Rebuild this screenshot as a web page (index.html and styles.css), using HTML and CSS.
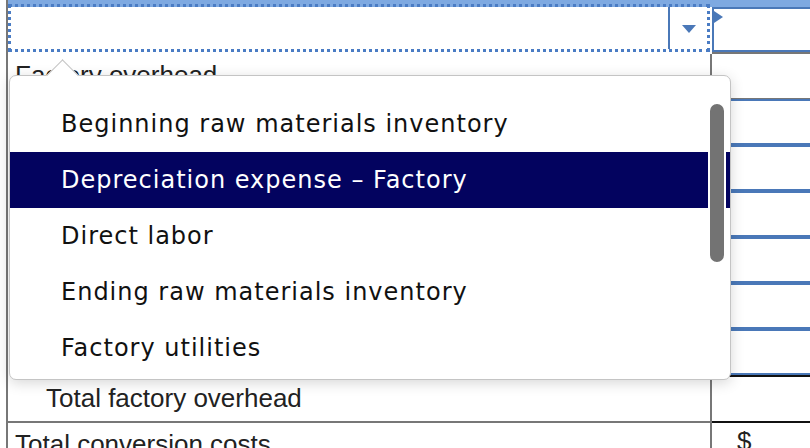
FILE: index.html
```html
<!DOCTYPE html>
<html>
  <head>
    <meta name="viewport" content="width=device-width,initial-scale=1.0" />
    <title>Conversion costs</title>
    <link rel="stylesheet" href="styles.css">
  </head>
  <body>
    <div class="sheet">
      <div class="row row-select">
        <div class="cell label">
          <div class="select">
            <div class="select-value"></div>
            <div class="select-btn"><span class="arrow"></span></div>
          </div>
        </div>
        <div class="cell amount">
          <div class="input focused"><span class="marker"></span></div>
        </div>
      </div>

      <div class="row row-head">
        <div class="cell label">Factory overhead</div>
        <div class="cell amount"></div>
      </div>

      <div class="row"><div class="cell label"></div><div class="cell amount"><div class="input"></div></div></div>
      <div class="row"><div class="cell label"></div><div class="cell amount"><div class="input"></div></div></div>
      <div class="row"><div class="cell label"></div><div class="cell amount"><div class="input"></div></div></div>
      <div class="row"><div class="cell label"></div><div class="cell amount"><div class="input"></div></div></div>
      <div class="row"><div class="cell label"></div><div class="cell amount"><div class="input"></div></div></div>
      <div class="row"><div class="cell label"></div><div class="cell amount"><div class="input"></div></div></div>

      <div class="row row-total">
        <div class="cell label indent">Total factory overhead</div>
        <div class="cell amount"></div>
      </div>

      <div class="row row-grand">
        <div class="cell label">Total conversion costs</div>
        <div class="cell amount">$</div>
      </div>
    </div>

    <div class="popup">
      <span class="caret"></span>
      <ul class="options">
        <li class="option">Beginning raw materials inventory</li>
        <li class="option selected">Depreciation expense – Factory</li>
        <li class="option">Direct labor</li>
        <li class="option">Ending raw materials inventory</li>
        <li class="option">Factory utilities</li>
      </ul>
      <span class="thumb"></span>
    </div>
  </body>
</html>
```

FILE: styles.css
```css
body {
  margin: 0;
  width: 810px;
  height: 448px;
  overflow: hidden;
  position: relative;
  background: #fff;
  font-family: "Liberation Sans", Arial, sans-serif;
  font-size: 26px;
  color: #222;
}

.sheet {
  margin-left: 6px;
  width: 840px;
  border-left: 2px solid #777;
}

.row {
  display: flex;
  height: 46px;
}

.cell {
  box-sizing: border-box;
}

.cell.label {
  width: 704px;
  flex-shrink: 0;
  border-right: 2px solid #777;
  padding-left: 7px;
  display: flex;
  align-items: center;
  white-space: nowrap;
}

.cell.label.indent {
  padding-left: 38px;
}

.cell.amount {
  flex: 1;
  display: flex;
  flex-direction: column;
}

.input {
  flex: 1;
  border-top: 2px solid #4a78b8;
  border-bottom: 2px solid #4a78b8;
  border-left: 2px solid #4a78b8;
}

/* top row with focused select */
.row-select {
  height: 54px;
  background: linear-gradient(#7ea9e1 0 7px, #fff 7px);
}

.row-select .cell.label {
  border-right: none;
  padding-left: 0;
  align-items: flex-start;
}

.select {
  margin-top: 4px;
  height: 48px;
  width: 702px;
  box-sizing: border-box;
  border: 3px dotted #4a7cc4;
  display: flex;
}

.select-value {
  flex: 1;
}

.select-btn {
  width: 37px;
  border-left: 2px solid #4a78b8;
  display: flex;
  align-items: center;
  justify-content: center;
}

.arrow {
  width: 0;
  height: 0;
  border-left: 7px solid transparent;
  border-right: 7px solid transparent;
  border-top: 8px solid #4a78b8;
  margin-top: 2px;
}

.row-select .cell.amount {
  padding-top: 7px;
  border-bottom: 2px solid #777;
}

.row-select .input {
  position: relative;
}

.marker {
  position: absolute;
  left: 0;
  top: 2px;
  width: 0;
  height: 0;
  border-top: 6px solid transparent;
  border-bottom: 6px solid transparent;
  border-left: 9px solid #4a78b8;
}

.row-head {
  height: 45px;
}

.row-head .cell.amount {
  border-bottom: 1px solid #777;
}

.row-head .cell.label {
  align-items: flex-start;
  padding-top: 6px;
}

.row-total .cell.amount {
  border-top: 2px solid #111;
}

.row-grand .cell.label {
  border-top: 2px solid #777;
  align-items: flex-start;
  padding-top: 6px;
}

.row-grand .cell.amount {
  border-top: 2px solid #111;
  padding: 3px 0 0 25px;
}

/* dropdown list */
.popup {
  position: absolute;
  left: 9px;
  top: 75px;
  width: 722px;
  height: 305px;
  box-sizing: border-box;
  border: 1px solid #c4c4c4;
  border-radius: 7px;
  background: #fff;
  box-shadow: 0 3px 14px rgba(0, 0, 0, 0.16);
  font-family: "DejaVu Sans", Verdana, sans-serif;
  font-size: 24px;
  letter-spacing: 1px;
  color: #111;
}

.caret {
  position: absolute;
  left: 41px;
  top: -12px;
  width: 22px;
  height: 22px;
  background: #fff;
  border-top: 1px solid #c4c4c4;
  border-left: 1px solid #c4c4c4;
  transform: rotate(45deg);
}

.options {
  list-style: none;
  margin: 0;
  padding: 20px 0 0;
}

.option {
  height: 56px;
  padding-left: 51px;
  display: flex;
  align-items: center;
  white-space: nowrap;
}

.option.selected {
  background: #03035f;
  color: #fff;
}

.thumb {
  position: absolute;
  left: 698px;
  top: 26px;
  width: 18px;
  height: 162px;
  box-sizing: border-box;
  border: 2px solid #fff;
  border-radius: 9px;
  background: #737373;
}
```
